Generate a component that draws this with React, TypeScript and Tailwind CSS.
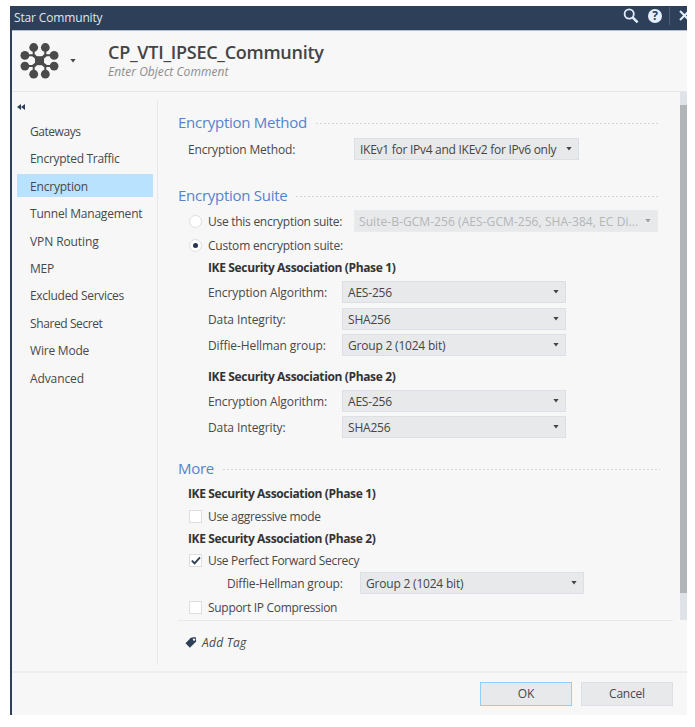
import { clsx } from "clsx";

const menuItems = [
  { name: "Gateways", tracking: "tracking-[-0.45px]" },
  { name: "Encrypted Traffic", tracking: "tracking-[-0.3px]" },
  { name: "Encryption", tracking: "tracking-[-0.2px]" },
  { name: "Tunnel Management", tracking: "tracking-[-0.2px]" },
  { name: "VPN Routing", tracking: "tracking-[-0.1px]" },
  { name: "MEP", tracking: "tracking-[-0.2px]" },
  { name: "Excluded Services", tracking: "tracking-[-0.3px]" },
  { name: "Shared Secret", tracking: "tracking-[-0.4px]" },
  { name: "Wire Mode", tracking: "tracking-[-0.2px]" },
  { name: "Advanced", tracking: "tracking-[-0.1px]" },
];

const StarIcon = () => (
  <svg className="h-[37px] w-[39px]" viewBox="0 0 39 37" fill="#4a4a4a" stroke="#4a4a4a">
    <rect x="15" y="13.2" width="9" height="9" stroke="none" />
    <path
      d="M13.7 5v6.5l3 3M25.3 5v6.5l-3 3M13.7 31v-7l3-3M25.3 31v-7l-3-3M5 12.3h7.5l4 3.2M34 12.3h-7.5l-4 3.2M5 23h7.5l4-3.2M34 23h-7.5l-4-3.2"
      fill="none"
      strokeWidth="2"
    />
    <g stroke="none">
      <circle cx="13.7" cy="4.5" r="4.4" />
      <circle cx="25.3" cy="4.5" r="4.4" />
      <circle cx="13.7" cy="31.2" r="4.4" />
      <circle cx="25.3" cy="31.2" r="4.4" />
      <circle cx="4.9" cy="12.4" r="4.4" />
      <circle cx="34.1" cy="12.4" r="4.4" />
      <circle cx="4.9" cy="23.1" r="4.4" />
      <circle cx="34.1" cy="23.1" r="4.4" />
    </g>
  </svg>
);

const Arrow = ({ className }: { className?: string }) => (
  <svg className={clsx("h-[4px] w-[6px] shrink-0", className)} viewBox="0 0 6 4" fill="currentColor">
    <path d="M.4 0h5.2L3 3.6z" />
  </svg>
);

const Select = ({ value, className, disabled }: { value: string; className: string; disabled?: boolean }) => (
  <div
    className={clsx(
      "flex h-[22px] shrink-0 items-center justify-between border bg-[#e7e9eb] pl-[5px] pr-[6px]",
      disabled ? "border-[#e9ebed] text-[#b4b6b8]" : "border-[#dcdfe3] text-[#454545]",
      className
    )}
  >
    <span className={clsx("whitespace-nowrap pt-px", disabled && "-ml-px tracking-[0.06px]")}>{value}</span>
    <Arrow className={disabled ? "text-[#9a9c9e]" : "text-[#444]"} />
  </div>
);

const Heading = ({ title, className }: { title: string; className?: string }) => (
  <div className={clsx("mr-[20px] flex h-5 items-center", className)}>
    <h2 className="whitespace-nowrap text-[15px] leading-5 tracking-[-0.27px] text-[#5583cc]">{title}</h2>
    <div className="ml-[9px] mt-[3px] h-px flex-1 bg-[repeating-linear-gradient(90deg,#d3d5d7_0_2px,transparent_2px_4px)]" />
  </div>
);

const Radio = ({ checked }: { checked?: boolean }) => (
  <span className="flex size-[13px] shrink-0 items-center justify-center rounded-full border border-[#dcdfe2] bg-white">
    {checked && <span className="size-[5px] rounded-full bg-[#26364f]" />}
  </span>
);

const Checkbox = ({ label, checked, className }: { label: string; checked?: boolean; className?: string }) => (
  <div className={clsx("ml-[11px] flex h-5 items-center", className)}>
    <span className="flex size-[13px] shrink-0 items-center justify-center border border-[#dcdfe2] bg-white">
      {checked && (
        <svg className="h-[9px] w-[10px]" viewBox="0 0 10 9" fill="none" stroke="#2e4059" strokeWidth="1.9">
          <path d="M.8 4.6L3.6 7.3 9 1.3" />
        </svg>
      )}
    </span>
    <span className="ml-[6px] pt-px tracking-[-0.3px]">{label}</span>
  </div>
);

const Field = ({ label, value, className }: { label: string; value: string; className?: string }) => (
  <div className={clsx("ml-[30px] flex items-center", className)}>
    <span className="w-[134px] whitespace-nowrap pt-px tracking-[-0.1px]">{label}</span>
    <Select value={value} className="w-[224px]" />
  </div>
);

const Association = ({ phase, className }: { phase: number; className?: string }) => (
  <div className={clsx("h-5 font-bold leading-[22px] tracking-[-0.36px] text-[#333]", className)}>
    IKE Security Association (Phase {phase})
  </div>
);

export default function App() {
  return (
    <div className="h-[727px] w-[695px] overflow-hidden bg-white pl-[10px] pt-[6px] font-['Open_Sans','Noto_Sans',sans-serif] text-[12px] leading-5 tracking-[-0.2px] text-[#484848]">
      <div className="flex h-[709px] w-[677px] flex-col overflow-hidden border-l-2 border-[#2e4059] bg-[#f7f7f7]">
        <div className="flex h-6 shrink-0 items-center bg-[#2e4059] pl-[2px] text-[#dfe6f0]">
          <span className="-mt-px tracking-[-0.15px]">Star Community</span>
          <div className="-mr-[3px] -mt-[5px] ml-auto flex items-center">
            <svg className="size-4" viewBox="0 0 16 16" fill="none" stroke="#dfeafa">
              <circle cx="6.2" cy="6" r="4.6" strokeWidth="1.8" />
              <path d="M9.6 9.4l5 5" strokeWidth="2.6" />
            </svg>
            <span className="ml-[9px] flex size-[14px] items-center justify-center rounded-full bg-[#e4effd] text-[12px] font-bold text-[#2e4059]">
              ?
            </span>
            <span className="ml-[7px] h-[18px] w-px bg-[#4d5e77]" />
            <svg className="ml-[9px] size-[11px]" viewBox="0 0 11 11" fill="none" stroke="#e4effd" strokeWidth="2">
              <path d="M1 1l9 9M10 1l-9 9" />
            </svg>
          </div>
        </div>

        <div className="flex h-[62px] shrink-0 items-start border-b border-[#e4e6e9] border-t border-t-[#b9bfc9] pl-[8px] pt-[12px]">
          <StarIcon />
          <Arrow className="ml-[11px] mt-[16px] text-[#444]" />
          <div className="ml-[32px] -mt-[3px]">
            <h1 className="text-[18px] font-semibold leading-6 tracking-[-0.27px] text-[#444]">
              CP_VTI_IPSEC_Community
            </h1>
            <p className="text-[12px] italic leading-4 tracking-[0.04px] text-[#8c8c8c]">Enter Object Comment</p>
          </div>
        </div>

        <div className="flex h-[581px] shrink-0 border-b-2 border-[#eceeef]">
          <nav className="mb-[6px] mt-2 w-[146px] shrink-0 border-r border-[#e6e8ea] pl-[5px] pr-[4px]">
            <svg className="mt-[4px] h-[6px] w-[8px]" viewBox="0 0 8 6" fill="#2e4059">
              <path d="M4 0v6L0 3zM8 0v6L4 3z" />
            </svg>
            <ul className="mt-[9px]">
              {menuItems.map((item) => (
                <li
                  key={item.name}
                  className={clsx(
                    "mb-[4.4px] h-[23px] whitespace-nowrap pl-[13px] leading-[25px]",
                    item.tracking,
                    item.name === "Encryption" && "bg-[#b9e2ff]"
                  )}
                >
                  {item.name}
                </li>
              ))}
            </ul>
          </nav>

          <main className="w-[522px] shrink-0 pl-5 pt-[20px]">
            <Heading title="Encryption Method" />
            <div className="ml-[10px] mt-[6px] flex items-center">
              <span className="w-[166px] pt-px tracking-[-0.15px]">Encryption Method:</span>
              <Select value="IKEv1 for IPv4 and IKEv2 for IPv6 only" className="w-[225px] tracking-[-0.27px]" />
            </div>

            <Heading title="Encryption Suite" className="mt-[25px]" />
            <div className="ml-[11px] mt-[5px] flex items-center">
              <Radio />
              <span className="ml-[6px] w-[146px] whitespace-nowrap pt-px tracking-[-0.27px]">
                Use this encryption suite:
              </span>
              <Select disabled value="Suite-B-GCM-256 (AES-GCM-256, SHA-384, EC Di..." className="w-[304px]" />
            </div>
            <div className="ml-[11px] mt-[2px] flex h-[22px] items-center">
              <Radio checked />
              <span className="ml-[6px] pt-px">Custom encryption suite:</span>
            </div>

            <Association phase={1} className="ml-[30px] mt-px" />
            <Field label="Encryption Algorithm:" value="AES-256" className="mt-[4px]" />
            <Field label="Data Integrity:" value="SHA256" className="mt-[5px]" />
            <Field label="Diffie-Hellman group:" value="Group 2 (1024 bit)" className="mt-[4px]" />

            <Association phase={2} className="ml-[30px] mt-[10px]" />
            <Field label="Encryption Algorithm:" value="AES-256" className="mt-[4px]" />
            <Field label="Data Integrity:" value="SHA256" className="mt-[4px]" />

            <Heading title="More" className="mt-5" />
            <Association phase={1} className="ml-[10px] mt-[5px]" />
            <Checkbox label="Use aggressive mode" className="mt-[3px]" />
            <Association phase={2} className="ml-[10px] mt-[2px]" />
            <Checkbox label="Use Perfect Forward Secrecy" checked className="mt-[2px]" />
            <div className="ml-[49px] mt-[2px] flex items-center">
              <span className="w-[133px] pt-px">Diffie-Hellman group:</span>
              <Select value="Group 2 (1024 bit)" className="w-[224px]" />
            </div>
            <Checkbox label="Support IP Compression" className="mt-[3px]" />

            <div className="mr-[7px] mt-[3px] flex items-center border-t border-[#e6e8ea] pl-[7px] pt-[11px]">
              <svg className="h-[11px] w-[12px]" viewBox="0 0 12 11" fill="#2e4059">
                <path fillRule="evenodd" d="M5.8.8L10.6 0l.6 4.4-6.3 6.3L.5 6.2zM9 1.4a1.2 1.2 0 100 2.4 1.2 1.2 0 000-2.4z" />
              </svg>
              <span className="ml-[5px] pt-px italic tracking-[0.25px]">Add Tag</span>
            </div>
          </main>

          <div className="h-[528px] w-[7px] shrink-0 bg-[#dfe2e7] pt-[13px]">
            <div className="h-[488px] bg-[#b1b5b8]" />
          </div>
        </div>

        <div className="flex justify-end gap-[9px] pr-[14px] pt-[9px]">
          <button className="h-6 w-[92px] border border-[#8fd0f8] bg-[#e7e9eb]">OK</button>
          <button className="h-6 w-[92px] border border-[#dcdfe3] bg-[#e7e9eb]">Cancel</button>
        </div>
      </div>
    </div>
  );
}
